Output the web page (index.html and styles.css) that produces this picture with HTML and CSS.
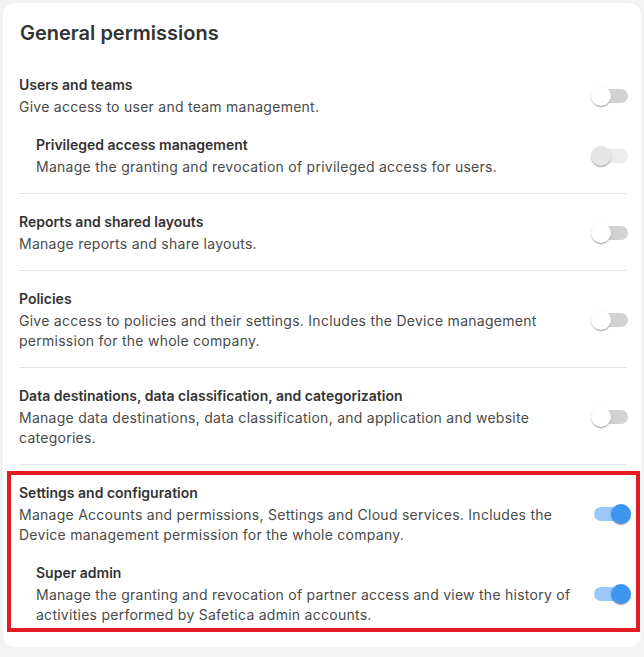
FILE: index.html
```html
<!DOCTYPE html>
<html>
<head>
<meta charset="utf-8">
<link rel="stylesheet" href="styles.css">
</head>
<body>
<div class="card">
  <h1 class="title">General permissions</h1>

  <section class="group">
    <div class="row">
      <div class="text">
        <div class="name">Users and teams</div>
        <div class="desc">Give access to user and team management.</div>
      </div>
      <span class="switch"><span class="track"></span><span class="thumb"></span></span>
    </div>
    <div class="row sub">
      <div class="text">
        <div class="name">Privileged access management</div>
        <div class="desc">Manage the granting and revocation of privileged access for users.</div>
      </div>
      <span class="switch disabled"><span class="track"></span><span class="thumb"></span></span>
    </div>
  </section>

  <section class="group">
    <div class="row">
      <div class="text">
        <div class="name">Reports and shared layouts</div>
        <div class="desc">Manage reports and share layouts.</div>
      </div>
      <span class="switch"><span class="track"></span><span class="thumb"></span></span>
    </div>
  </section>

  <section class="group">
    <div class="row">
      <div class="text">
        <div class="name">Policies</div>
        <div class="desc">Give access to policies and their settings. Includes the Device management permission for the whole company.</div>
      </div>
      <span class="switch"><span class="track"></span><span class="thumb"></span></span>
    </div>
  </section>

  <section class="group">
    <div class="row">
      <div class="text">
        <div class="name">Data destinations, data classification, and categorization</div>
        <div class="desc">Manage data destinations, data classification, and application and website categories.</div>
      </div>
      <span class="switch"><span class="track"></span><span class="thumb"></span></span>
    </div>
  </section>

  <section class="group highlighted">
    <div class="row">
      <div class="text">
        <div class="name">Settings and configuration</div>
        <div class="desc">Manage Accounts and permissions, Settings and Cloud services. Includes the Device management permission for the whole company.</div>
      </div>
      <span class="switch on"><span class="track"></span><span class="thumb"></span></span>
    </div>
    <div class="row sub">
      <div class="text">
        <div class="name">Super admin</div>
        <div class="desc">Manage the granting and revocation of partner access and view the history of activities performed by Safetica admin accounts.</div>
      </div>
      <span class="switch on"><span class="track"></span><span class="thumb"></span></span>
    </div>
  </section>
</div>
</body>
</html>
```

FILE: styles.css
```css
* { box-sizing: border-box; }
html, body { margin: 0; padding: 0; }
body {
  background: #f3f3f3;
  padding: 3px;
  font-family: Inter, "Noto Sans", sans-serif;
  color: #333;
}
.card {
  width: 638px;
  background: #fff;
  border-radius: 12px;
  padding: 16px 14px 6px 16px;
}
.title {
  margin: 0 0 10px 1px;
  font-size: 20px;
  line-height: 28px;
  font-weight: 600;
  color: #333;
}
.group {
  padding: 18px 0 16px;
}
.group + .group {
  border-top: 1px solid #e2e2e2;
}
.row {
  display: flex;
  align-items: center;
  gap: 16px;
}
.row + .row { margin-top: 18px; }
.row.sub { padding-left: 17px; }
.text { flex: 1; min-width: 0; }
.name {
  font-size: 14px;
  line-height: 20px;
  font-weight: 600;
  color: #333;
  margin-bottom: 2px;
}
.desc {
  font-size: 14px;
  line-height: 20px;
  letter-spacing: 0.26px;
  color: #4a4a4a;
}
.switch {
  position: relative;
  flex: none;
  width: 40px;
  height: 20px;
  margin-right: -4px;
}
.track {
  position: absolute;
  left: 3px;
  top: 3px;
  width: 34px;
  height: 14px;
  border-radius: 7px;
  background: #d2d2d2;
}
.thumb {
  position: absolute;
  left: 0;
  top: 0;
  width: 20px;
  height: 20px;
  border-radius: 50%;
  background: #fff;
  box-shadow: 0 2px 1px -1px rgba(0,0,0,.2), 0 1px 1px 0 rgba(0,0,0,.14), 0 1px 3px 0 rgba(0,0,0,.12);
}
.switch.disabled .track { background: #ececec; }
.switch.disabled .thumb { background: #e6e6e6; }
.switch.on .track { background: #9cc8f8; }
.switch.on .thumb { left: 20px; background: #3f95f2; }
.highlighted { position: relative; }
.highlighted::after {
  content: "";
  position: absolute;
  left: -12px;
  right: -13px;
  top: 6px;
  bottom: 9px;
  border: 4px solid #e31b23;
  pointer-events: none;
}
```
